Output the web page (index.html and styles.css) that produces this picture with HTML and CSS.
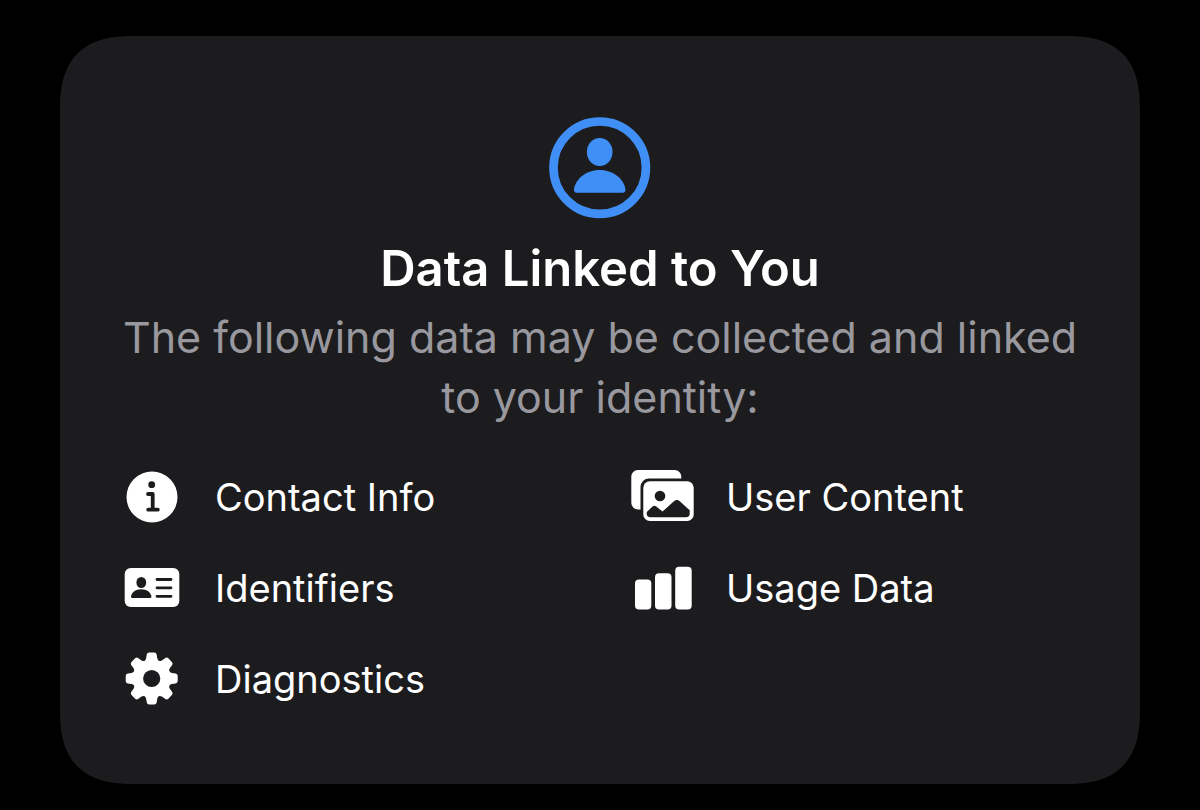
FILE: index.html
```html
<!DOCTYPE html>
<html lang="en">
<head>
  <meta charset="UTF-8" />
  <meta name="viewport" content="width=device-width, initial-scale=1.0"/>
  <title>App Privacy - Data Linked to You</title>
  <link rel="stylesheet" href="styles.css">
</head>
<body>

<section class="privacy-card">
  <svg class="card-icon" viewBox="0 0 102 102" aria-hidden="true">
    <circle cx="50.7" cy="50.7" r="46.2" fill="none" stroke="currentColor" stroke-width="8.6"/>
    <ellipse cx="50.7" cy="35" rx="12.8" ry="14" fill="currentColor"/>
    <path d="M28 75.7C25.5 75.7 24.700 74.200 25 72C26.500 62.500 36.500 53 50.700 53S74.900 62.500 76.400 72C76.700 74.200 75.900 75.700 73.400 75.700Z" fill="currentColor"/>
  </svg>

  <h2>Data Linked to You</h2>
  <p>The following data may be collected and linked to your identity:</p>

  <ul class="data-list">
    <li>
      <svg class="item-icon" viewBox="0 0 64 56" aria-hidden="true">
        <circle cx="32" cy="28" r="25.5" fill="currentColor"/>
        <circle class="cut" cx="31.7" cy="15.7" r="3.4"/>
        <path class="cut-line" d="M28 25H32.7V40.7M28.2 40.7H37.8" stroke-width="3.8"/>
      </svg>
      <span>Contact Info</span>
    </li>
    <li>
      <svg class="item-icon" viewBox="0 0 64 56" aria-hidden="true">
        <rect x="0.3" y="1" width="50" height="39.5" rx="6.5" fill="currentColor"/>
        <rect class="cut" x="9.5" y="9.500" width="58" height="46" rx="8.5"/>
        <rect x="12.3" y="12.3" width="50.4" height="39.7" rx="6.5" fill="currentColor"/>
        <circle class="cut" cx="29" cy="27" r="5.3"/>
        <path class="cut" d="M15.7 44.5C15.7 43.3 16 42.8 16.8 42L21.5 37.6C22.8 36.4 24 36.4 25.3 37.5L31.5 42.6L43.2 32.1C45 30.5 46.7 30.5 48.5 32.1L58.7 41.3V44.5Q58.7 48.3 55 48.3H19.5Q15.7 48.3 15.7 44.5Z"/>
      </svg>
      <span>User Content</span>
    </li>
    <li>
      <svg class="item-icon" viewBox="0 0 64 56" aria-hidden="true">
        <rect x="4.7" y="8" width="54.6" height="39" rx="6" fill="currentColor"/>
        <ellipse class="cut" cx="21.3" cy="22.5" rx="4.9" ry="5.5"/>
        <path class="cut" d="M12.3 38Q11 38 11 36.5C11.5 32.5 15.5 29.3 21.2 29.3S30.9 32.5 31.4 36.5Q31.4 38 30.1 38Z"/>
        <path class="cut-line" d="M37 19.5H51M37 27.8H51M37 36.3H51" stroke-width="2.8"/>
      </svg>
      <span>Identifiers</span>
    </li>
    <li>
      <svg class="item-icon" viewBox="0 0 64 56" aria-hidden="true">
        <rect x="4" y="19.5" width="16.3" height="30" rx="4" fill="currentColor"/>
        <rect x="24" y="13.2" width="16.5" height="36.3" rx="4" fill="currentColor"/>
        <rect x="44.2" y="6.7" width="16.5" height="42.8" rx="4" fill="currentColor"/>
      </svg>
      <span>Usage Data</span>
    </li>
    <li>
      <svg class="item-icon" viewBox="0 0 64 56" aria-hidden="true">
        <defs>
          <path id="tooth" d="M-8 -17Q-6 -18 -5.6 -20L-5 -23.8Q-4.6 -26 -2.5 -26H2.5Q4.6 -26 5 -23.8L5.6 -20Q6 -18 8 -17L4 -10H-4Z"/>
        </defs>
        <g transform="translate(31.7 27.5)" fill="currentColor">
          <circle r="18.8"/>
          <use href="#tooth"/>
          <use href="#tooth" transform="rotate(45)"/>
          <use href="#tooth" transform="rotate(90)"/>
          <use href="#tooth" transform="rotate(135)"/>
          <use href="#tooth" transform="rotate(180)"/>
          <use href="#tooth" transform="rotate(225)"/>
          <use href="#tooth" transform="rotate(270)"/>
          <use href="#tooth" transform="rotate(315)"/>
          <circle class="cut" r="8.6"/>
        </g>
      </svg>
      <span>Diagnostics</span>
    </li>
  </ul>
</section>

</body>
</html>
```

FILE: styles.css
```css
* {
  box-sizing: border-box;
}

body {
  margin: 0;
  padding: 36px 60px 26px;
  background: #000;
  color: #fff;
  font-family: Inter, 'Liberation Sans', sans-serif;
}

.privacy-card {
  display: flex;
  flex-direction: column;
  align-items: center;
  padding: 81px 60px 77px;
  background: #1c1c1e;
  border-radius: 62px;
  text-align: center;
}

/* smoother corners where the browser has them */
@supports (corner-shape: superellipse(1.4)) {
  .privacy-card {
    border-radius: 76px;
    corner-shape: superellipse(1.4);
  }
}

.card-icon {
  width: 102px;
  height: 102px;
  color: #408ff7;
}

.privacy-card h2 {
  margin: 20px 0 8px;
  font-size: 49px;
  font-weight: 600;
  line-height: 60px;
}

.privacy-card p {
  margin: 0;
  color: #98989e;
  font-size: 43px;
  line-height: 60px;
}

.data-list {
  display: grid;
  grid-template-columns: 1fr 1fr;
  gap: 35px 62px;
  width: 100%;
  margin: 42px 0 0;
  padding: 0;
  list-style: none;
  text-align: left;
}

.data-list li {
  display: flex;
  align-items: center;
  gap: 31px;
  font-size: 38px;
  line-height: 56px;
}

.item-icon {
  flex: none;
  width: 64px;
  height: 56px;
}

.cut {
  fill: #1c1c1e;
}

.cut-line {
  fill: none;
  stroke: #1c1c1e;
  stroke-linecap: round;
  stroke-linejoin: round;
}

@media (max-width: 900px) {
  body {
    padding: 16px;
  }

  .privacy-card {
    padding: 40px 24px;
    border-radius: 40px;
  }

  .privacy-card h2 {
    font-size: 32px;
    line-height: 40px;
  }

  .privacy-card p {
    font-size: 24px;
    line-height: 32px;
  }

  .data-list {
    grid-template-columns: 1fr;
  }

  .data-list li {
    font-size: 24px;
  }
}
```
